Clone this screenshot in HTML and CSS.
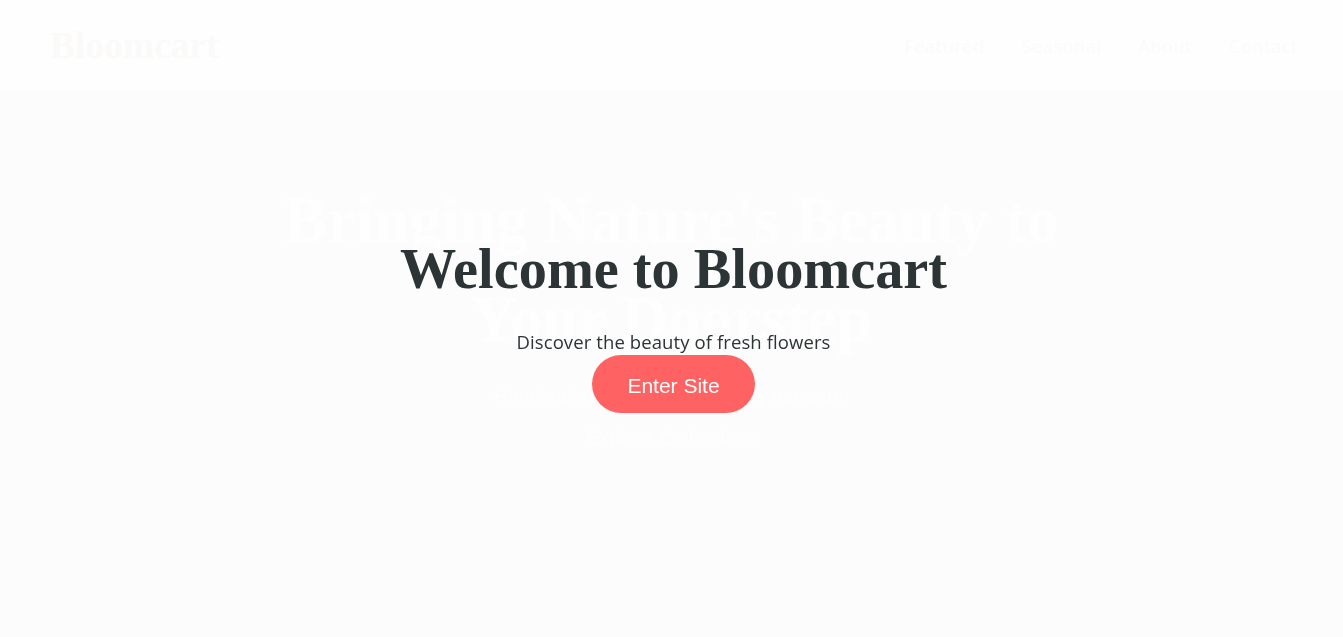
FILE: index.html
```html
<!DOCTYPE html>
<html lang="en">
<head>
<meta charset="utf-8">
<title>Bloomcart</title>
<link rel="stylesheet" href="styles.css">
</head>
<body>
<header class="site-header">
  <a class="logo" href="#">Bloomcart</a>
  <nav class="nav">
    <a href="#">Featured</a>
    <a href="#">Seasonal</a>
    <a href="#">About</a>
    <a href="#">Contact</a>
  </nav>
</header>
<main class="hero">
  <h1 class="hero-title">Bringing Nature's Beauty to<br>Your Doorstep</h1>
  <p class="hero-sub">Handcrafted bouquets for every occasion</p>
  <a class="hero-btn" href="#">Explore Collections</a>
</main>
<div class="welcome">
  <h2 class="welcome-title">Welcome to Bloomcart</h2>
  <p class="welcome-sub">Discover the beauty of fresh flowers</p>
  <button class="enter-btn" type="button">Enter Site</button>
</div>
</body>
</html>
```
FILE: styles.css
```css
* { box-sizing: border-box; }
html, body { margin: 0; padding: 0; }
body {
  font-family: "Open Sans", "Liberation Sans", sans-serif;
  background: #fcfcfc;
  height: 637px;
  overflow: hidden;
}
a { text-decoration: none; }

.site-header {
  height: 91px;
  background: #fefefe;
  display: flex;
  align-items: center;
  justify-content: space-between;
  padding: 0 45px 0 50px;
}
.logo {
  font-family: "Liberation Serif", serif;
  font-weight: 700;
  font-size: 37.5px;
  color: #fbfaf9;
}
.nav {
  display: flex;
  gap: 37px;
}
.nav a {
  font-size: 18px;
  letter-spacing: 0.6px;
  color: #fbfbfb;
}

.hero {
  background: #fcfcfc;
  height: 546px;
  padding-top: 80px;
  display: flex;
  flex-direction: column;
  align-items: center;
  text-align: center;
}
.hero-title {
  margin: 0;
  font-family: "Liberation Serif", serif;
  font-weight: 700;
  font-size: 64.5px;
  line-height: 99px;
  color: #fefefe;
}
.hero-sub {
  margin: 12px 0 2px;
  font-family: "Liberation Sans", sans-serif;
  font-size: 19.5px;
  line-height: 30px;
  color: #fefefe;
}
.hero-btn {
  font-family: "Liberation Sans", sans-serif;
  font-size: 20px;
  line-height: 26px;
  padding: 12px 30px;
  border-radius: 30px;
  background: #fdfcfc;
  color: #fefefe;
}

.welcome {
  position: fixed;
  inset: 0;
  display: flex;
  flex-direction: column;
  align-items: center;
  justify-content: center;
  padding: 12px 0 0 4px;
  text-align: center;
}
.welcome-title {
  margin: 0 0 24px;
  font-family: "Liberation Serif", serif;
  font-weight: 700;
  font-size: 56.3px;
  line-height: 1.2;
  color: #2d3436;
}
.welcome-sub {
  margin: 0;
  font-size: 18.5px;
  letter-spacing: 0.1px;
  line-height: 27px;
  color: #2d3436;
}
.enter-btn {
  border: none;
  background: #ff6262;
  color: #ffffff;
  font-family: "Liberation Sans", sans-serif;
  font-size: 21px;
  line-height: 26px;
  padding: 18px 35px 14px;
  border-radius: 30px;
  cursor: pointer;
}
```
